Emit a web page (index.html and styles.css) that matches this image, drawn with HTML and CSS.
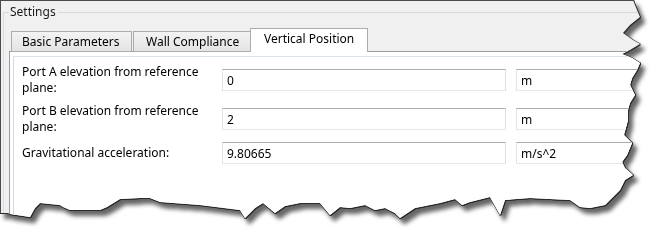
FILE: index.html
```html
<!DOCTYPE html>
<html lang="en">
<head>
    <meta charset="UTF-8">
    <title>Settings - Vertical Position</title>
    <link rel="stylesheet" href="styles.css">
</head>
<body>
    <div class="sheet">
        <div class="window">
            <fieldset class="settings">
                <legend>Settings</legend>
                <div class="tabs">
                    <div class="tab tab-basic">Basic Parameters</div>
                    <div class="tab tab-wall">Wall Compliance</div>
                    <div class="tab tab-active">Vertical Position</div>
                </div>
                <div class="panel">
                    <div class="pane">
                        <div class="row row-tall">
                            <label for="port-a">Port A elevation from reference plane:</label>
                            <input type="text" id="port-a" value="0">
                            <input type="text" class="unit" value="m">
                        </div>
                        <div class="row row-tall">
                            <label for="port-b">Port B elevation from reference plane:</label>
                            <input type="text" id="port-b" value="2">
                            <input type="text" class="unit" value="m">
                        </div>
                        <div class="row">
                            <label for="gravity">Gravitational acceleration:</label>
                            <input type="text" id="gravity" value="9.80665">
                            <input type="text" class="unit" value="m/s^2">
                        </div>
                    </div>
                </div>
            </fieldset>
        </div>
    </div>
</body>
</html>
```

FILE: styles.css
```css
body {
    margin: 0;
    background: #ffffff;
    font-family: "Noto Sans", "Open Sans", sans-serif;
    font-size: 12px;
    color: #000;
}
.sheet {
    width: 665px;
    height: 240px;
    filter: drop-shadow(1px 0 0 #2b2b2b) drop-shadow(0 1px 0 #2b2b2b) drop-shadow(4px 5px 2px rgba(0, 0, 0, 0.6));
}
.window {
    width: 660px;
    height: 230px;
    box-sizing: border-box;
    background: #f0f0f0;
    border-top: 1px solid #4a4a4a;
    border-left: 1px solid #4a4a4a;
    padding: 3px 0 0 2px;
    clip-path: polygon(0 0, 633px 0, 637px 10px, 640px 17px, 630px 25px, 623px 33px, 633px 40px, 640px 44px, 630px 50px, 622px 54px, 632px 58px, 640px 63px, 637px 70px, 632px 78px, 630px 85px, 635px 95px, 630px 103px, 628px 110px, 628px 120px, 624px 135px, 632px 143px, 627px 155px, 622px 162px, 625px 168px, 633px 175px, 625px 180px, 620px 190px, 610px 200px, 605px 205px, 590px 208px, 580px 207px, 570px 200px, 530px 198px, 505px 200px, 500px 215px, 490px 197px, 470px 202px, 462px 205px, 455px 199px, 440px 203px, 415px 208px, 400px 218px, 395px 213px, 385px 208px, 375px 210px, 365px 205px, 350px 208px, 340px 207px, 330px 215px, 320px 203px, 300px 203px, 285px 206px, 275px 213px, 263px 203px, 255px 208px, 245px 218px, 240px 210px, 200px 205px, 160px 202px, 150px 198px, 140px 198px, 120px 199px, 107px 207px, 100px 210px, 70px 210px, 63px 207px, 60px 205px, 40px 203px, 35px 208px, 30px 217px, 10px 214px, 8px 213px, 0 213px);
}
.settings {
    margin: 0;
    padding: 8px 0 0 5px;
    border: 1px solid #d5dbe1;
    min-height: 220px;
}
.settings legend {
    padding: 0 2px 0 1px;
    line-height: 16px;
    color: #1a1a1a;
}
.tabs {
    display: flex;
    align-items: flex-end;
    margin-bottom: -1px;
}
.tab {
    box-sizing: border-box;
    height: 21px;
    line-height: 19px;
    padding: 0 10px;
    border: 1px solid #acacac;
    background: linear-gradient(#f3f3f3, #e4e4e4);
    white-space: nowrap;
}
.tab-basic {
    width: 121px;
    margin-left: 2px;
}
.tab-wall {
    width: 118px;
    margin-left: 1px;
    padding-left: 12px;
}
.tab-active {
    position: relative;
    width: 118px;
    height: 24px;
    line-height: 20px;
    margin-left: -1px;
    padding-left: 13px;
    background: #ffffff;
    border-bottom: none;
}
.panel {
    background: #ffffff;
    border: 1px solid #9c9c9c;
    padding: 4px 0 0 3px;
    height: 170px;
}
.pane {
    border-top: 1px solid #dde3ea;
    border-left: 1px solid #d3dae3;
    height: 100%;
    padding: 7px 0 0 8px;
}
.row {
    display: grid;
    grid-template-columns: 190px 284px 140px;
    column-gap: 10px;
    align-items: center;
    min-height: 22px;
    margin-bottom: 7px;
}
.row-tall {
    height: 32px;
}
.row label {
    line-height: 16px;
    padding-right: 6px;
}
.row input {
    box-sizing: border-box;
    height: 22px;
    margin: 0;
    padding: 0 4px;
    font: inherit;
    color: #000;
    background: #ffffff;
    border: 1px solid;
    border-color: #abadb3 #dbdfe6 #e3e9ef #e2e3ea;
    outline: none;
}
```
